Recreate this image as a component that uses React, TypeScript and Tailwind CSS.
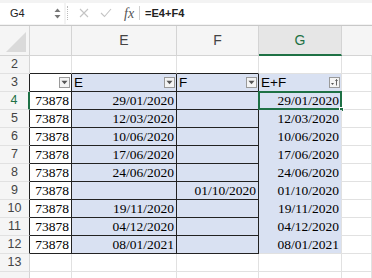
import React from "react";

const COLS = "grid-cols-[30px_42px_105px_82px_83px_30px]";
const BLUE = "bg-[#d9e1f2]";

const dates = [
  ["29/01/2020", "", "29/01/2020"],
  ["12/03/2020", "", "12/03/2020"],
  ["10/06/2020", "", "10/06/2020"],
  ["17/06/2020", "", "17/06/2020"],
  ["24/06/2020", "", "24/06/2020"],
  ["", "01/10/2020", "01/10/2020"],
  ["19/11/2020", "", "19/11/2020"],
  ["04/12/2020", "", "04/12/2020"],
  ["08/01/2021", "", "08/01/2021"],
];

function Drop({ sort }: { sort?: boolean }) {
  return (
    <div className="absolute right-[1px] top-[3px] w-[11px] h-[11px] border border-[#9a9a9a] bg-[#f4f4f4] flex items-center justify-center">
      {sort ? (
        <svg width="9" height="9" viewBox="0 0 9 9">
          <path d="M1 5 L4 5 L2.5 7 Z" fill="#555" />
          <path d="M6.5 1.5 V7.5 M5.3 2.8 L6.5 1.5 L7.7 2.8" stroke="#555" strokeWidth="0.9" fill="none" />
        </svg>
      ) : (
        <svg width="7" height="5" viewBox="0 0 7 5">
          <path d="M0.5 0.8 L6.5 0.8 L3.5 4.3 Z" fill="#555" />
        </svg>
      )}
    </div>
  );
}

export default function App() {
  const serif = { fontFamily: '"Liberation Serif", "Times New Roman", serif' };
  const sans = { fontFamily: '"Liberation Sans", Arial, sans-serif' };
  const rowHead = (n: number | null, opts: { green?: boolean; dark?: boolean } = {}) => (
    <div
      className={`h-[18px] border-b border-b-[#e1e1e1] border-r flex items-center justify-center text-[12.5px] bg-[#f5f5f5] ${
        opts.green ? "border-r-[#1e7145] text-[#1e7145] border-r-2 bg-[#e2e2e2]" : opts.dark ? "border-r-[#222] text-[#444]" : "border-r-[#d4d4d4] text-[#444]"
      }`}
      style={sans}
    >
      {n}
    </div>
  );
  const gridCell = (extra = "") => (
    <div className={`h-[18px] border-r border-b border-[#e1e1e1] bg-white ${extra}`} />
  );

  return (
    <div className="w-[372px] h-[278px] overflow-hidden bg-white relative" style={sans}>
      {/* formula bar */}
      <div className="h-[26px] bg-[#f3f3f3] border-b border-[#c8c8c8] flex items-center pt-[1px]">
        <div className="h-[21px] w-[64px] bg-white flex items-center pl-[10px] text-[11px] text-[#222] relative">
          G4
          <svg className="absolute left-[54px] top-[5px]" width="7" height="11" viewBox="0 0 7 11">
            <path d="M0.5 4 L3.5 0.5 L6.5 4 Z" fill="#777" />
            <path d="M0.5 7 L3.5 10.5 L6.5 7 Z" fill="#777" />
          </svg>
        </div>
        <div className="h-[21px] flex-1 bg-white ml-[2px] flex items-center relative">
          <div className="w-px h-[14px] border-l border-dotted border-[#bbb] ml-[1px]" />
          <svg className="ml-[11px]" width="10" height="10" viewBox="0 0 10 10">
            <path d="M1 1 L9 9 M9 1 L1 9" stroke="#c4c4c4" strokeWidth="1.1" />
          </svg>
          <svg className="ml-[11px]" width="12" height="10" viewBox="0 0 12 10">
            <path d="M1 5 L4.5 8.5 L11 1" stroke="#c4c4c4" strokeWidth="1.1" fill="none" />
          </svg>
          <span className="ml-[12px] text-[14px] italic text-[#555]" style={serif}>
            fx
          </span>
          <div className="w-px h-[14px] bg-[#d0d0d0] ml-[5px]" />
          <span className="ml-[5px] text-[11px] font-semibold text-[#222]">=E4+F4</span>
        </div>
      </div>

      {/* column headers */}
      <div className={`grid ${COLS} h-[30px] bg-[#f5f5f5] text-[14px] text-[#444]`}>
        <div className="border-r border-b border-[#d4d4d4] relative overflow-hidden">
          <svg className="absolute right-[3px] bottom-[3px]" width="20" height="20" viewBox="0 0 20 20">
            <path d="M20 0 L20 20 L0 20 Z" fill="#dadada" />
          </svg>
        </div>
        <div className="border-r border-b border-[#d4d4d4]" />
        <div className="border-r border-b border-[#d4d4d4] flex items-center justify-center">E</div>
        <div className="border-r border-b border-[#d4d4d4] flex items-center justify-center">F</div>
        <div className="border-r border-[#d4d4d4] border-b-2 border-b-[#1e7145] bg-[#e6e6e6] flex items-center justify-center text-[#1e7145]">
          G
        </div>
        <div className="border-b border-[#d4d4d4]" />
      </div>

      {/* row 2 */}
      <div className={`grid ${COLS}`}>
        {rowHead(2)}
        <div className="h-[18px] border-r border-r-[#e1e1e1] border-b border-b-[#222]" />
        <div className="h-[18px] border-r border-r-[#e1e1e1] border-b border-b-[#222]" />
        <div className="h-[18px] border-r border-r-[#e1e1e1] border-b border-b-[#222]" />
        {gridCell()}
        {gridCell()}
      </div>

      {/* row 3 header */}
      <div className={`grid ${COLS} text-[13.5px] text-black`}>
        {rowHead(3, { dark: true })}
        <div className="h-[18px] border-r border-b border-[#222] bg-white relative">
          <Drop />
        </div>
        <div className={`h-[18px] border-r border-b border-[#222] ${BLUE} relative pl-[2px] leading-[18px]`}>
          E
          <Drop />
        </div>
        <div className={`h-[18px] border-r border-b border-[#222] ${BLUE} relative pl-[2px] leading-[18px]`}>
          F
          <Drop />
        </div>
        <div className={`h-[18px] border-r border-b border-r-[#e1e1e1] border-b-[#d9e1f2] ${BLUE} relative pl-[2px] leading-[18px]`}>
          E+F
          <Drop sort />
        </div>
        {gridCell()}
      </div>

      {dates.map((r, i) => (
        <div key={i} className={`grid ${COLS} text-[13.5px] text-black`} style={serif}>
          {rowHead(i + 4, { green: i === 0, dark: i !== 0 })}
          <div className="h-[18px] border-r border-b border-[#222] bg-white text-right pr-[2px] leading-[18px]">73878</div>
          <div className={`h-[18px] border-r border-b border-[#222] ${BLUE} text-right pr-[2px] leading-[18px]`}>{r[0]}</div>
          <div className={`h-[18px] border-r border-b border-[#222] ${BLUE} text-right pr-[2px] leading-[18px]`}>{r[1]}</div>
          <div
            className={`h-[18px] border-r border-b border-r-[#e1e1e1] ${i === 8 ? "border-b-[#e1e1e1]" : "border-b-[#d9e1f2]"} ${BLUE} text-right pr-[2px] leading-[18px] relative`}
          >
            {r[2]}
            {i === 0 && (
              <div className="absolute left-[-1px] top-[-1px] right-[-1px] bottom-[-1px] border-2 border-[#1e7145]">
                <div className="absolute right-[-4px] bottom-[-4px] w-[5px] h-[5px] bg-[#1e7145] border border-white" />
              </div>
            )}
          </div>
          {gridCell()}
        </div>
      ))}

      {[13, null].map((n, k) => (
        <div key={k} className={`grid ${COLS}`}>
          {rowHead(n)}
          {gridCell()}
          {gridCell()}
          {gridCell()}
          {gridCell()}
          {gridCell()}
        </div>
      ))}
    </div>
  );
}
